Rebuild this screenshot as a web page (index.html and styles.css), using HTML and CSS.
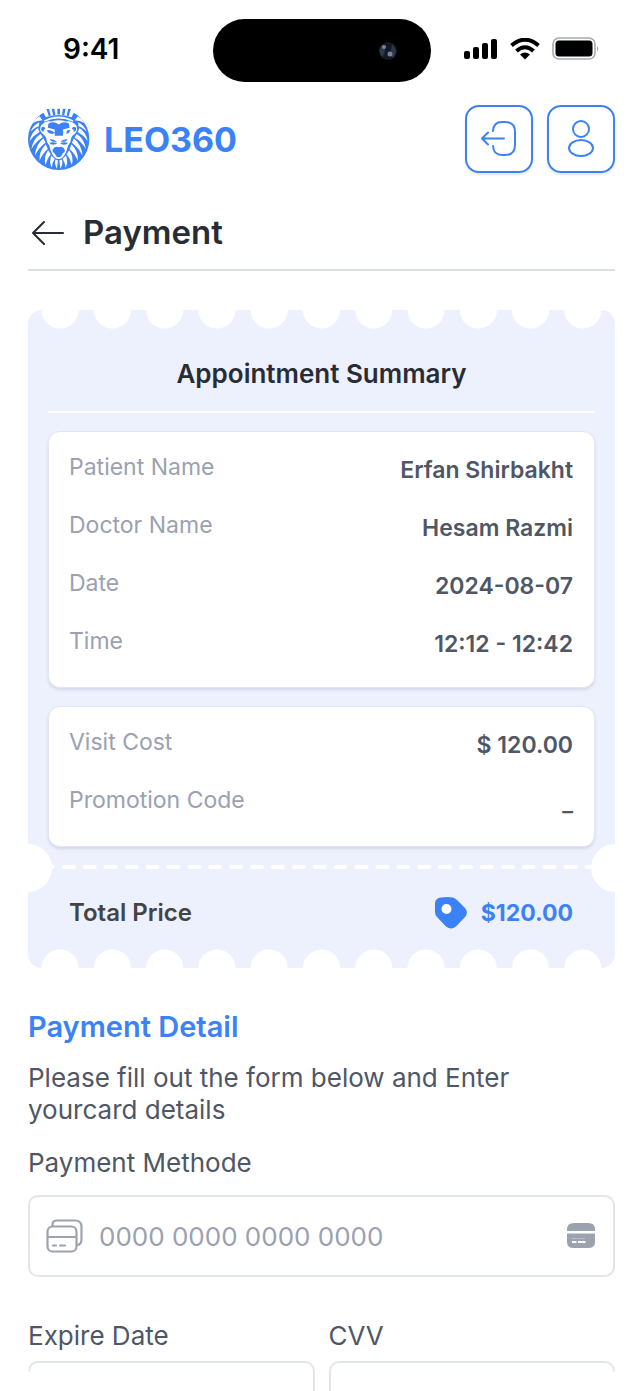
FILE: index.html
```html
<!DOCTYPE html>
<html lang="en">
<head>
    <meta charset="UTF-8">
    <meta name="viewport" content="width=device-width, initial-scale=1.0">
    <title>LEO360 - Payment</title>
    <link rel="stylesheet" href="styles.css">
</head>
<body>
    <div class="screen">
        <!-- Phone status bar -->
        <div class="status-bar">
            <span class="status-time">9:41</span>
            <div class="island">
                <svg width="22" height="26" viewBox="0 0 22 26" aria-hidden="true">
                    <circle cx="11" cy="13" r="9" fill="#151922"/>
                    <path d="M5 7q-5 6 0 12q3-3 3-7t-3-5zM15 6q7 6 1 14q-3-2-2-7z" fill="#2b3850"/>
                    <circle cx="7" cy="9" r="2" fill="#78839a"/>
                    <circle cx="13" cy="16" r="2.5" fill="#78839a"/>
                </svg>
            </div>
            <div class="status-icons">
                <svg width="34" height="22" viewBox="0 0 34 22" aria-hidden="true">
                    <rect x="0" y="13" width="6" height="8" rx="2"/>
                    <rect x="9" y="9" width="6" height="12" rx="2"/>
                    <rect x="18" y="5" width="6" height="16" rx="2"/>
                    <rect x="27" y="1" width="6" height="20" rx="2"/>
                </svg>
                <svg width="30" height="22" viewBox="0 0 30 22" aria-hidden="true">
                    <path d="M1.5 7.5Q15-4 28.500 7.500" fill="none" stroke="#000" stroke-width="4"/>
                    <path d="M6.500 13Q15 5.500 23.500 13" fill="none" stroke="#000" stroke-width="4"/>
                    <path d="M10 16.500Q15 12.500 20 16.500L15 21.500z"/>
                </svg>
                <svg width="47" height="24" viewBox="0 0 47 24" aria-hidden="true">
                    <rect x="1" y="1" width="42" height="21" rx="6" fill="none" stroke="#a7a9b5" stroke-width="1.600"/>
                    <rect x="3.500" y="3.500" width="37" height="16" rx="3.500"/>
                    <path d="M45 9q2.500 2.500 0 6z" fill="#a7a9b5"/>
                </svg>
            </div>
        </div>

        <header class="header">
            <a class="brand" href="#">
                <svg class="brand-logo" viewBox="22 22 188 188" aria-hidden="true">
                    <circle cx="115" cy="117" r="93" fill="#3b82f6"/>
                    <g fill="#fff">
                        <!-- crown -->
                        <path d="M62 22L76 50Q115 36 154 50L168 22V15H62z"/>
                        <path d="M70 60Q115 36 160 60L158 64Q115 44 72 64z"/>
                        <!-- face -->
                        <path d="M62 74Q76 60 92 63Q115 56 138 63Q154 60 168 74Q176 87 164 100Q155 105 153 113Q152 128 143 137Q138 160 127 172Q115 182 103 172Q92 160 87 137Q78 128 77 113Q75 105 66 100Q54 87 62 74z"/>
                        <!-- mane, left half -->
                        <g id="mane">
                            <path d="M57 47Q42 56 36 68Q50 59 66 59z"/>
                            <path d="M56 65Q37 74 30 94Q42 80 55 77z"/>
                            <path d="M52 83Q32 96 27 122Q40 104 57 95z"/>
                            <path d="M60 101Q37 116 32 147Q46 124 67 111z"/>
                            <path d="M69 114Q45 134 43 167Q54 142 75 127z"/>
                            <path d="M76 132Q54 154 57 183Q65 161 82 146z"/>
                            <path d="M83 150Q68 171 75 195Q80 175 91 162z"/>
                            <path d="M93 166Q85 184 94 203Q96 187 103 176z"/>
                            <path d="M105 178Q101 191 110 206Q111 193 113 181z"/>
                        </g>
                        <use href="#mane" transform="translate(230 0) scale(-1 1)"/>
                    </g>
                    <g fill="#3b82f6">
                        <path d="M78 25h8l5 20-6 2zM94 24h8l3 19-7 1zM111 24h8v18h-8zM128 24h8l-4 20-7-1zM144 25h8l-7 22-6-2z"/>
                        <path d="M84 69Q100 60 115 72Q130 60 146 69L148 82L128 87V106H103V87L82 82z"/>
                        <g id="face-side">
                            <path d="M79 89Q93 87 104 97Q94 104 84 97z"/>
                            <path d="M63 81Q70 75 75 84Q68 87 69 95Q59 90 63 81z"/>
                            <path d="M88 117Q100 116 110 124Q100 126 92 122zM87 127Q99 125 111 128Q104 136 91 132z"/>
                        </g>
                        <use href="#face-side" transform="translate(230 0) scale(-1 1)"/>
                        <path d="M96 149Q103 135 115 141Q127 135 134 149Q134 158 127 160L122 169Q115 173 108 169L103 160Q96 158 96 149z"/>
                    </g>
                    <path d="M129 87l12 1-4 14-8 2z" fill="#fff"/>
                </svg>
                <span class="brand-name">LEO360</span>
            </a>
            <div class="header-actions">
                <button class="icon-btn" type="button" aria-label="Log out">
                    <svg width="38" height="38" viewBox="0 0 38 38">
                        <path d="M13 11Q13.500 2 22 2H25Q35 2 35 12V25Q35 35 25 35H22Q13.500 35 13 26M24 18.500H2M8 12.500L2 18.500L8 24.500"/>
                    </svg>
                </button>
                <button class="icon-btn" type="button" aria-label="Profile">
                    <svg width="38" height="38" viewBox="0 0 38 38">
                        <circle cx="19" cy="9" r="8"/>
                        <ellipse cx="19" cy="28" rx="12" ry="8"/>
                    </svg>
                </button>
            </div>
        </header>

        <div class="page-title">
            <button class="back-btn" type="button" aria-label="Back">
                <svg width="34" height="24" viewBox="0 0 34 24">
                    <path d="M32 12H2M13 1L2 12L13 23"/>
                </svg>
            </button>
            <h1>Payment</h1>
        </div>

        <main>
            <section class="ticket">
                <h2 class="ticket-title">Appointment Summary</h2>
                <dl class="card">
                    <div class="row"><dt>Patient Name</dt><dd>Erfan Shirbakht</dd></div>
                    <div class="row"><dt>Doctor Name</dt><dd>Hesam Razmi</dd></div>
                    <div class="row"><dt>Date</dt><dd>2024-08-07</dd></div>
                    <div class="row"><dt>Time</dt><dd>12:12 - 12:42</dd></div>
                </dl>
                <dl class="card">
                    <div class="row"><dt>Visit Cost</dt><dd>$ 120.00</dd></div>
                    <div class="row"><dt>Promotion Code</dt><dd>_</dd></div>
                </dl>
                <div class="tear">
                    <svg width="100%" height="4" aria-hidden="true">
                        <line x1="2" y1="2" x2="100%" y2="2" stroke="#fff" stroke-width="4" stroke-linecap="round" stroke-dasharray="10 10.900"/>
                    </svg>
                </div>
                <div class="total">
                    <span>Total Price</span>
                    <span class="total-price">
                        <svg width="32" height="32" viewBox="0 0 32 32" aria-hidden="true">
                            <path d="M6 0.500Q12-0.500 18 0.500Q20 1 22 3L30 11Q33.500 15 30.500 19.500L21 29.500Q16 33.500 11 29.500L2 20Q0 18 0 15V6Q0.500 1 6 0.500z" fill="#3b82f6"/>
                            <circle cx="11.500" cy="12" r="5" fill="#fff"/>
                        </svg>
                        $120.00
                    </span>
                </div>
            </section>

            <form class="payment-form">
                <h2>Payment Detail</h2>
                <p>Please fill out the form below and Enter yourcard details</p>

                <label for="card-number">Payment Methode</label>
                <div class="card-field">
                    <svg width="37" height="34" viewBox="0 0 37 34" fill="none" stroke="#9ca3af" stroke-width="2.200" stroke-linecap="round" aria-hidden="true">
                        <rect x="1.500" y="7.500" width="29" height="25" rx="5"/>
                        <path d="M6.500 7V5Q7 1.500 11 1.500H29Q35.500 1.500 35.500 8V20Q35.500 26 31 26M2 18H30M7 26.500H10M14 26.500H19"/>
                    </svg>
                    <input id="card-number" type="text" inputmode="numeric" placeholder="0000 0000 0000 0000">
                    <svg width="28" height="26" viewBox="0 0 28 26" aria-hidden="true">
                        <path d="M0 8V6Q0 0 7 0H21Q28 0 28 6V8zM0 10.500H28V19Q28 25 21 25H7Q0 25 0 19z" fill="#9ca3af"/>
                        <path d="M5 15.500H10M11 15.500H18" stroke="#b9bec9"/>
                        <path d="M5 19H9.500M11 19H18.500" stroke="#fff" stroke-width="2"/>
                    </svg>
                </div>

                <div class="field-row">
                    <div class="field">
                        <label for="expire-date">Expire Date</label>
                        <input id="expire-date" type="text">
                    </div>
                    <div class="field">
                        <label for="cvv">CVV</label>
                        <input id="cvv" type="text" inputmode="numeric">
                    </div>
                </div>
            </form>
        </main>
    </div>
</body>
</html>
```

FILE: styles.css
```css
* {
    box-sizing: border-box;
}
body {
    margin: 0;
    background: #fff;
    font-family: Inter, "Liberation Sans", sans-serif;
    color: #4f5665;
}
h1, h2, p, dl, dd {
    margin: 0;
}
button {
    padding: 0;
    background: none;
    border: none;
    cursor: pointer;
}
svg {
    display: block;
    flex-shrink: 0;
}

.screen {
    height: 100vh;
    padding: 19px 28px 0;
    border-radius: 82px;
    overflow: hidden;
}

/* status bar */
.status-bar {
    display: grid;
    grid-template-columns: 1fr auto 1fr;
    align-items: center;
}
.status-time {
    padding: 0 0 4px 35px;
    font-size: 28px;
    font-weight: 600;
    line-height: 56px;
    color: #000;
}
.island {
    display: flex;
    align-items: center;
    justify-content: flex-end;
    width: 218px;
    height: 63px;
    padding-right: 32px;
    background: #000;
    border-radius: 32px;
}
.status-icons {
    display: flex;
    align-items: center;
    justify-content: flex-end;
    gap: 12px;
    padding: 0 16px 4px 0;
}

/* header */
.header {
    display: flex;
    align-items: center;
    justify-content: space-between;
    margin-top: 23px;
}
.brand {
    display: flex;
    align-items: center;
    gap: 14px;
    color: #3b82f6;
    text-decoration: none;
}
.brand-logo {
    width: 62px;
    height: 62px;
}
.brand-name {
    font-size: 34px;
    font-weight: 700;
}
.header-actions {
    display: flex;
    gap: 14px;
}
.icon-btn {
    display: flex;
    align-items: center;
    justify-content: center;
    width: 68px;
    height: 68px;
    border: 2px solid #3b82f6;
    border-radius: 14px;
    box-shadow: 0 2px 3px rgba(0,0,0,0.1);
}
.icon-btn svg {
    fill: none;
    stroke: #3b82f6;
    stroke-width: 2;
    stroke-linecap: round;
    stroke-linejoin: round;
}

.page-title {
    display: flex;
    align-items: center;
    gap: 18px;
    margin-top: 37px;
    padding: 0 0 14px 3px;
    border-bottom: 2px solid #dcdee5;
}
.page-title h1 {
    font-size: 33px;
    font-weight: 600;
    line-height: 45px;
    color: #282c35;
}
.back-btn svg {
    fill: none;
    stroke: #282c35;
    stroke-width: 2;
    stroke-linecap: round;
    stroke-linejoin: round;
}

/* ticket */
.ticket {
    position: relative;
    margin-top: 39px;
    padding: 42px 20px 31px;
    background: #edf1fe;
    border-radius: 14px;
}
.ticket::before,
.ticket::after {
    content: "";
    position: absolute;
    left: 6px;
    right: 6px;
    height: 19px;
    background-size: calc(100% / 11) 19px;
}
.ticket::before {
    top: 0;
    background-image: radial-gradient(circle at 50% 0, #fff 18px, transparent 19px);
}
.ticket::after {
    bottom: 0;
    background-image: radial-gradient(circle at 50% 100%, #fff 18px, transparent 19px);
}
.ticket-title {
    padding-bottom: 15px;
    border-bottom: 2px solid #fff;
    font-size: 26px;
    font-weight: 600;
    line-height: 44px;
    text-align: center;
    color: #282c35;
}
.card {
    display: flex;
    flex-direction: column;
    gap: 20px;
    margin-top: 18px;
    padding: 19px 21px 24px 20px;
    background: #fff;
    border: 1px solid #e2e6ee;
    border-radius: 12px;
    box-shadow: 0 2px 3px rgba(60,70,100,0.14);
}
.row {
    display: flex;
    justify-content: space-between;
    font-size: 23px;
}
.row dt {
    line-height: 32px;
    color: #9aa1b0;
}
.row dd {
    font-weight: 600;
    line-height: 38px;
}
.tear {
    position: relative;
    margin: 18px -20px 0;
    padding: 0 13px;
}
.tear::before,
.tear::after {
    content: "";
    position: absolute;
    top: -21px;
    width: 24px;
    height: 48px;
    background: #fff;
}
.tear::before {
    left: 0;
    border-radius: 0 24px 24px 0;
}
.tear::after {
    right: 0;
    border-radius: 24px 0 0 24px;
}
.total {
    display: flex;
    align-items: center;
    justify-content: space-between;
    margin-top: 20px;
    padding: 0 22px 0 21px;
    font-size: 24px;
    font-weight: 600;
    line-height: 48px;
    color: #444;
}
.total-price {
    display: flex;
    align-items: center;
    gap: 14px;
    font-size: 23px;
    font-weight: 700;
    color: #3b82f6;
}

/* payment form */
.payment-form {
    margin-top: 39px;
}
.payment-form h2 {
    font-size: 29px;
    font-weight: 600;
    line-height: 40px;
    color: #3b82f6;
}
.payment-form p {
    margin: 15px 0 17px;
    font-size: 26px;
    line-height: 32px;
}
.payment-form label {
    display: block;
    font-size: 26px;
    line-height: 40px;
}
.payment-form input {
    min-width: 0;
    font-family: inherit;
    font-size: 26px;
    color: #4f5665;
}
.payment-form input::placeholder {
    color: #9aa1b0;
    opacity: 1;
}
.card-field {
    display: flex;
    align-items: center;
    gap: 16px;
    height: 82px;
    margin-top: 12px;
    padding: 0 18px 0 16px;
    border: 2px solid #e2e5ec;
    border-radius: 10px;
}
.card-field input {
    flex: 1;
    padding: 0;
    border: none;
    outline: none;
}
.field-row {
    display: grid;
    grid-template-columns: 1fr 1fr;
    gap: 14px;
    margin-top: 39px;
}
.field input {
    width: 100%;
    height: 82px;
    margin-top: 5px;
    padding: 0 18px;
    border: 2px solid #e2e5ec;
    border-radius: 10px;
}
```
